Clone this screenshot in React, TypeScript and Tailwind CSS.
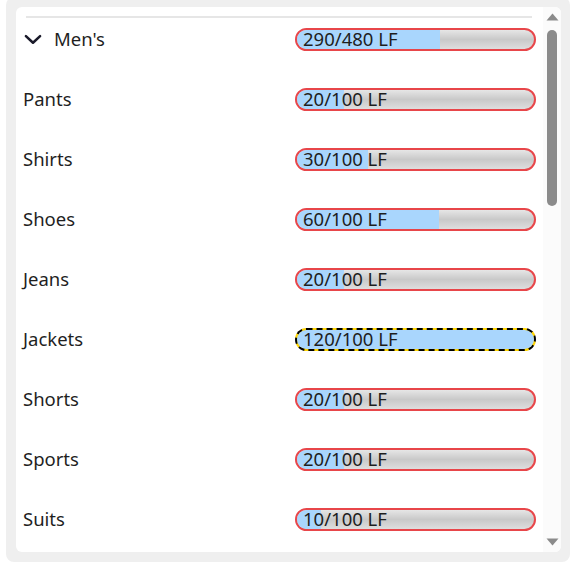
import React from 'react'

interface Row {
  label: string
  used: number
  total: number
  header?: boolean
}

const rows: Row[] = [
  { label: "Men's", used: 290, total: 480, header: true },
  { label: 'Pants', used: 20, total: 100 },
  { label: 'Shirts', used: 30, total: 100 },
  { label: 'Shoes', used: 60, total: 100 },
  { label: 'Jeans', used: 20, total: 100 },
  { label: 'Jackets', used: 120, total: 100 },
  { label: 'Shorts', used: 20, total: 100 },
  { label: 'Sports', used: 20, total: 100 },
  { label: 'Suits', used: 10, total: 100 },
]

const CapacityBar: React.FC<{ used: number; total: number }> = ({ used, total }) => {
  const over = used > total
  const pct = Math.min(used / total, 1) * 100
  return (
    <div
      className={
        over
          ? 'relative h-[23px] w-[241px] rounded-full border-2 border-dashed border-black bg-[#ffd400]'
          : 'relative h-[23px] w-[241px] rounded-full border-2 border-[#e8464a] bg-linear-to-b from-[#e6e6e6] via-[#c9c9c9] to-[#dedede]'
      }
    >
      <div
        className={
          over
            ? 'absolute inset-y-0 left-0 rounded-full bg-[#a9d6fd]'
            : 'absolute inset-y-0 left-0 rounded-l-full bg-[#a9d6fd]'
        }
        style={{ width: `${pct}%` }}
      />
      <span className="relative flex h-full items-center pb-[2px] pl-[6px] text-[18.5px] leading-[19px] text-[#1e1e1e]">
        {used}/{total} LF
      </span>
    </div>
  )
}

export default function App() {
  return (
    <div
      className="ml-[6px] -mt-[3px] h-[565px] w-[564px] rounded-lg bg-[#efefef] pl-[10px] pr-[9px] pt-[10px] pb-[10px]"
      style={{ fontFamily: '"Noto Sans", "Open Sans", sans-serif' }}
    >
      <div className="flex h-full overflow-hidden rounded-md bg-white">
        <div className="flex-1 overflow-hidden pt-[9px]">
          <div className="ml-[10px] mr-[11px] h-[2px] bg-[#e6e6e6]" />
          {rows.map((row) =>
            row.header ? (
              <div
                key={row.label}
                className="box-border flex h-[51px] items-center justify-between pb-[9px] pl-[7px] pr-[7px]"
              >
                <div className="flex items-center gap-[11px] text-[18.5px] text-[#1f1f1f]">
                  <svg width="20" height="20" viewBox="0 0 24 24" fill="none" stroke="#1a1a2a" strokeWidth="3" strokeLinecap="round" strokeLinejoin="round">
                    <path d="M3.5 8.5l8.5 8 8.5-8" />
                  </svg>
                  <span>{row.label}</span>
                </div>
                <CapacityBar used={row.used} total={row.total} />
              </div>
            ) : (
              <div key={row.label} className="flex h-[60px] items-center justify-between pl-[7px] pr-[7px]">
                <span className="text-[18.5px] text-[#1f1f1f]">{row.label}</span>
                <CapacityBar used={row.used} total={row.total} />
              </div>
            )
          )}
        </div>
        <div className="flex w-[18px] flex-col items-center bg-[#fbfbfb]">
          <svg width="13" height="8" viewBox="0 0 13 8" className="mt-[6px]">
            <path d="M0.5 7.5 L6.5 0.5 L12.5 7.5 Z" fill="#8b8b8b" />
          </svg>
          <div className="mt-[9px] h-[176px] w-[10px] rounded-full bg-[#8b8b8b]" />
          <div className="flex-1" />
          <svg width="13" height="8" viewBox="0 0 13 8" className="mb-[6px]">
            <path d="M0.5 0.5 L6.5 7.5 L12.5 0.5 Z" fill="#8b8b8b" />
          </svg>
        </div>
      </div>
    </div>
  )
}
